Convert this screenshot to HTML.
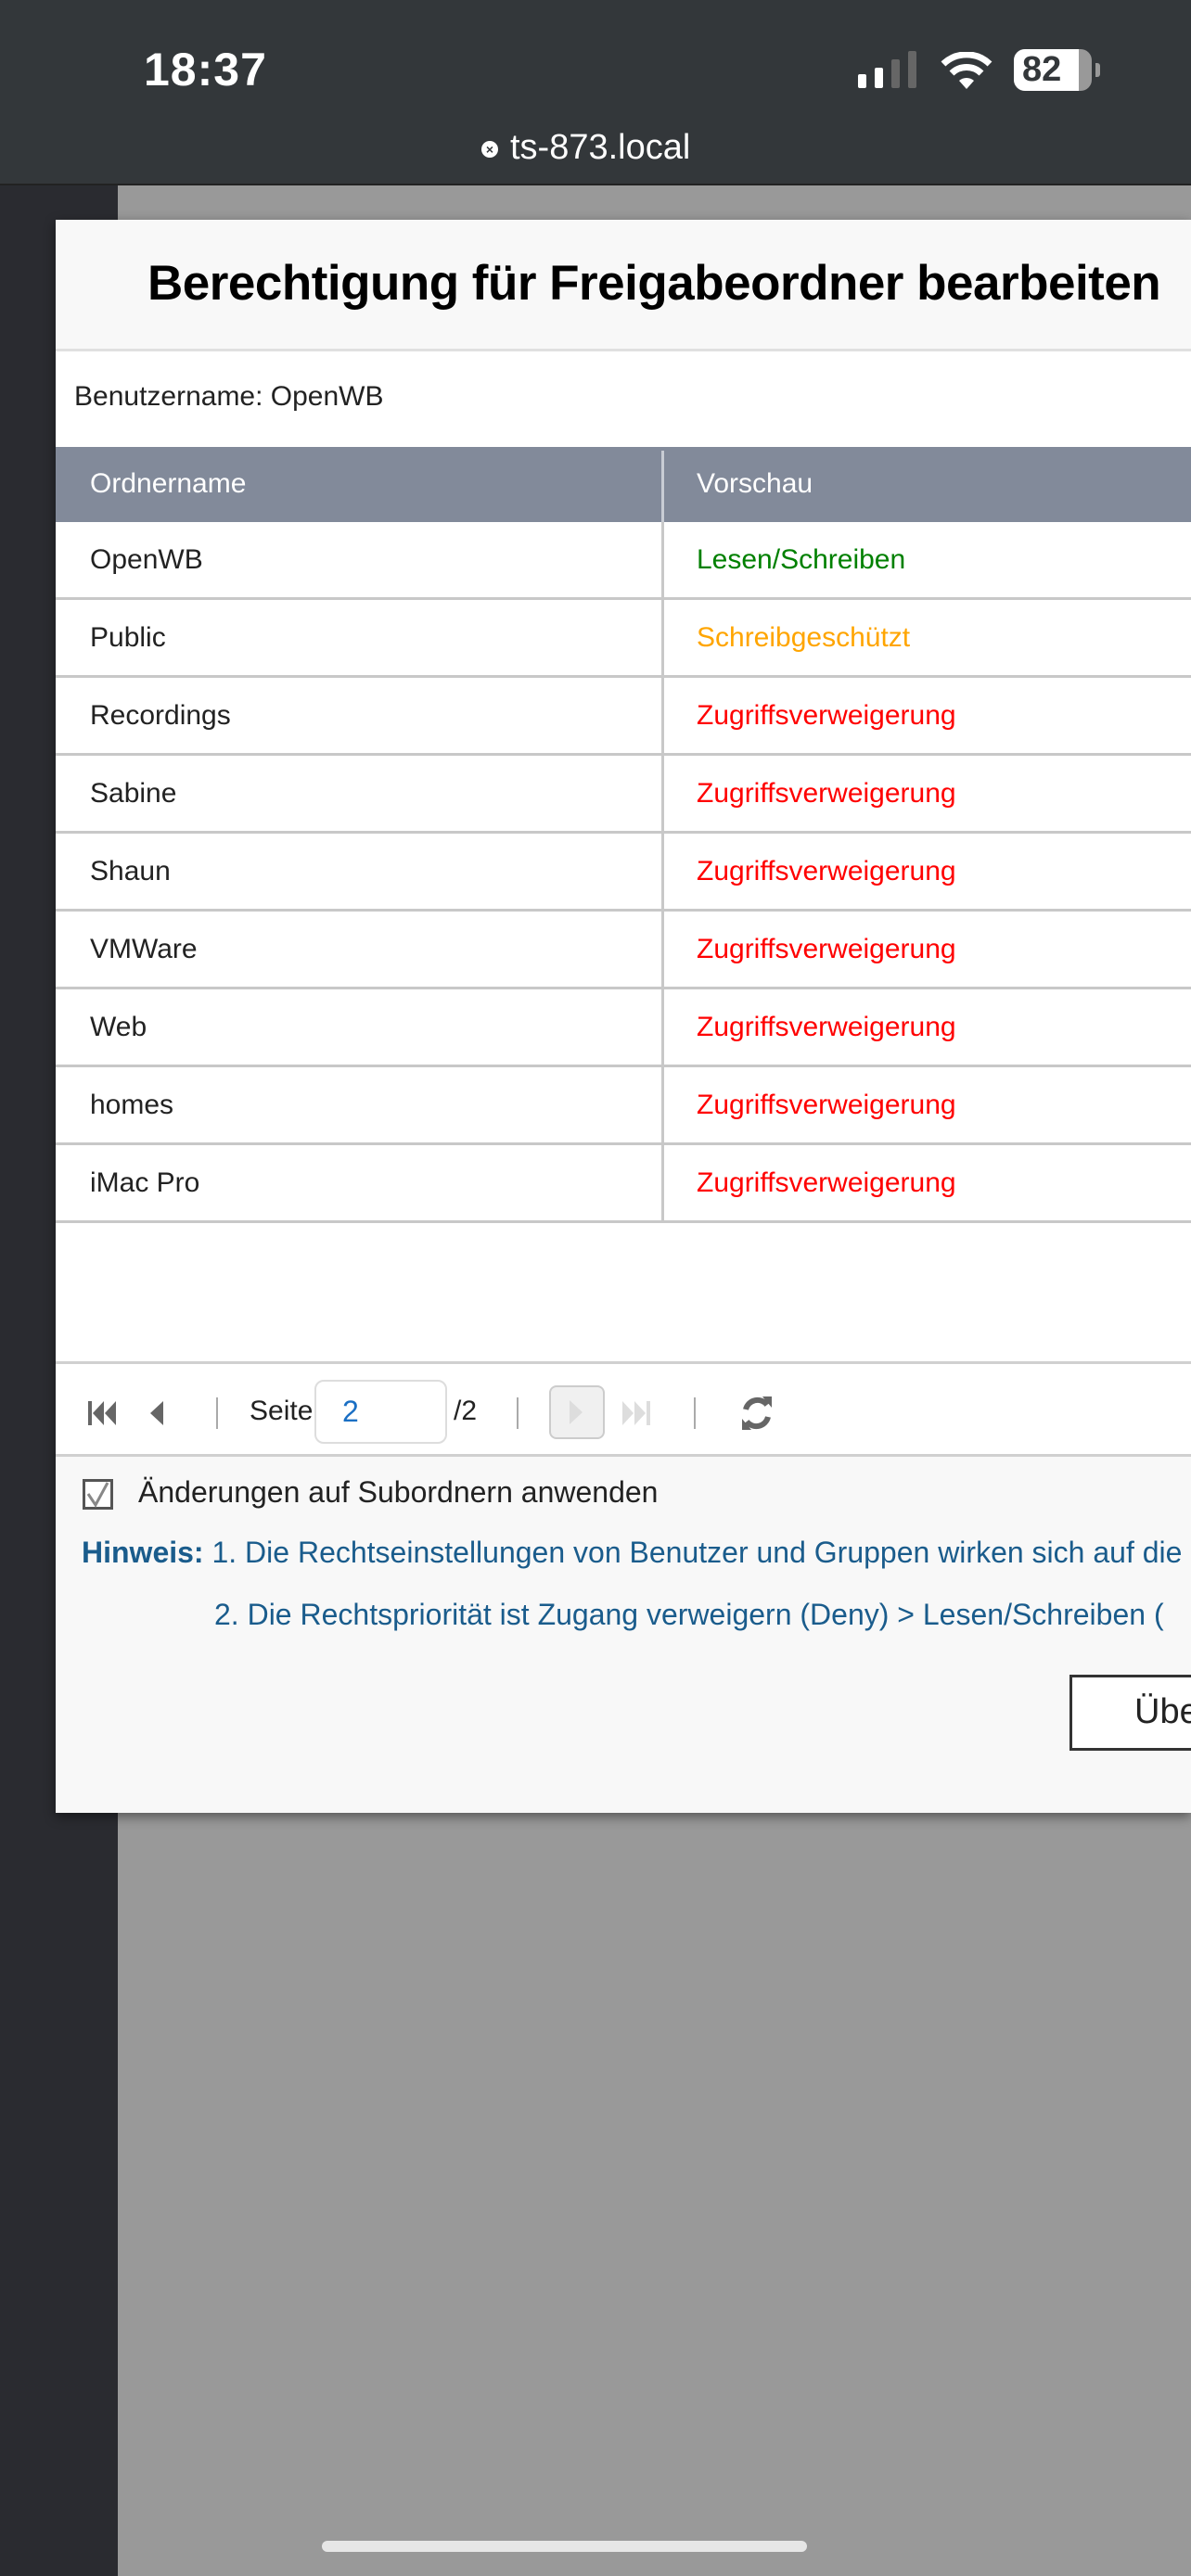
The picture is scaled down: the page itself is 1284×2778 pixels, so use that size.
<!DOCTYPE html>
<html><head><meta charset="utf-8">
<style>
*{margin:0;padding:0;box-sizing:border-box}
body{width:1284px;height:2778px;position:relative;overflow:hidden;background:#999;font-family:"Liberation Sans",Arial,sans-serif}
.abs{position:absolute}
.status{left:0;top:0;width:1284px;height:200px;background:#33373a;border-bottom:2px solid #222}
.leftstrip{left:0;top:200px;width:127px;height:2578px;background:#2a2b30}
.dialog{left:60px;top:237px;width:1224px;height:1718px;background:#f8f8f8;box-shadow:0 4px 12px rgba(0,0,0,.45)}
.title{left:0;top:0;width:1224px;height:142px;border-bottom:3px solid #e0e0e0;background:#f8f8f8}
.title span{position:absolute;left:99px;top:38px;font-size:53px;font-weight:bold;color:#000;letter-spacing:-0.5px;white-space:nowrap}
.white{left:0;top:142px;width:1224px;height:1089px;background:#fff}
.user{left:20px;top:174px;font-size:30px;color:#222}
.thead{left:0;top:245px;width:1224px;height:81px;background:#828a9a;color:#fff;font-size:30px}
.row{left:0;width:1224px;height:84px;border-bottom:3px solid #c8c8c8;font-size:30px;color:#222}
.c1{position:absolute;left:37px;top:24px}
.c2{position:absolute;left:691px;top:24px}
.vd{position:absolute;left:653px;top:0;width:3px;height:100%;background:#c8c8c8}
.pager{left:0;top:1231px;width:1224px;height:103px;background:#fff;border-top:3px solid #d0d0d0;border-bottom:3px solid #d0d0d0}
.sep{position:absolute;top:36px;width:2px;height:34px;background:#aaa}
.hint{color:#1a5c8c;font-size:32px;white-space:nowrap}
</style></head><body>
<div class="abs status">
  <div class="abs" style="left:155px;top:46px;font-size:50px;font-weight:bold;color:#fff;letter-spacing:1px">18:37</div>
  <div class="abs" style="left:925px;top:80px;width:9px;height:15px;background:#fff;border-radius:2px"></div>
  <div class="abs" style="left:943px;top:73px;width:9px;height:22px;background:#fff;border-radius:2px"></div>
  <div class="abs" style="left:961px;top:64px;width:9px;height:31px;background:#666;border-radius:2px"></div>
  <div class="abs" style="left:979px;top:55px;width:9px;height:40px;background:#666;border-radius:2px"></div>
  <svg class="abs" style="left:1012px;top:56px" width="60" height="42" viewBox="0 0 60 42"><path d="M30 40 L22 31 A12 12 0 0 1 38 31 Z" fill="#fff"/><path d="M14 23 A23 23 0 0 1 46 23" stroke="#fff" stroke-width="7" fill="none"/><path d="M5 13 A36 36 0 0 1 55 13" stroke="#fff" stroke-width="7" fill="none"/></svg>
  <div class="abs" style="left:1093px;top:53px;width:84px;height:45px;border-radius:12px;background:#999;overflow:hidden"><div style="width:70px;height:45px;background:#fff"></div></div>
  <div class="abs" style="left:1181px;top:68px;width:5px;height:15px;background:#999;border-radius:0 3px 3px 0"></div>
  <div class="abs" style="left:1102px;top:54px;font-size:38px;font-weight:bold;color:#33373a">82</div>
  <div class="abs" style="left:519px;top:152px;width:18px;height:18px;border-radius:50%;background:#fff;color:#33373a;font-size:14px;font-weight:bold;text-align:center;line-height:18px">×</div>
  <div class="abs" style="left:550px;top:138px;font-size:38px;color:#fff">ts-873.local</div>
</div>
<div class="abs leftstrip"></div>
<div class="abs dialog">
  <div class="abs title"><span>Berechtigung für Freigabeordner bearbeiten</span></div>
  <div class="abs white"></div>
  <div class="abs user">Benutzername: OpenWB</div>
  <div class="abs thead"><span class="c1" style="top:23px">Ordnername</span><div class="vd" style="background:#c8ccd4;top:4px"></div><span class="c2" style="top:23px">Vorschau</span></div>
  <div class="abs row" style="top:326px"><span class="c1">OpenWB</span><div class="vd"></div><span class="c2" style="color:#008000">Lesen/Schreiben</span></div>
  <div class="abs row" style="top:410px"><span class="c1">Public</span><div class="vd"></div><span class="c2" style="color:#ffa500">Schreibgeschützt</span></div>
  <div class="abs row" style="top:494px"><span class="c1">Recordings</span><div class="vd"></div><span class="c2" style="color:#f00">Zugriffsverweigerung</span></div>
  <div class="abs row" style="top:578px"><span class="c1">Sabine</span><div class="vd"></div><span class="c2" style="color:#f00">Zugriffsverweigerung</span></div>
  <div class="abs row" style="top:662px"><span class="c1">Shaun</span><div class="vd"></div><span class="c2" style="color:#f00">Zugriffsverweigerung</span></div>
  <div class="abs row" style="top:746px"><span class="c1">VMWare</span><div class="vd"></div><span class="c2" style="color:#f00">Zugriffsverweigerung</span></div>
  <div class="abs row" style="top:830px"><span class="c1">Web</span><div class="vd"></div><span class="c2" style="color:#f00">Zugriffsverweigerung</span></div>
  <div class="abs row" style="top:914px"><span class="c1">homes</span><div class="vd"></div><span class="c2" style="color:#f00">Zugriffsverweigerung</span></div>
  <div class="abs row" style="top:998px"><span class="c1">iMac Pro</span><div class="vd"></div><span class="c2" style="color:#f00">Zugriffsverweigerung</span></div>
  <div class="abs pager">
    <svg class="abs" style="left:34px;top:38px" width="34" height="30" viewBox="0 0 34 30"><rect x="1" y="2" width="4" height="26" fill="#666"/><path d="M18 2 L6 15 L18 28Z M31 2 L19 15 L31 28Z" fill="#666"/></svg>
    <svg class="abs" style="left:98px;top:38px" width="20" height="30" viewBox="0 0 20 30"><path d="M18 2 L4 15 L18 28Z" fill="#666"/></svg>
    <div class="sep" style="left:173px"></div>
    <div class="abs" style="left:209px;top:34px;font-size:30px;color:#222">Seite</div>
    <div class="abs" style="left:279px;top:17px;width:143px;height:69px;border:2px solid #ddd;border-radius:10px;background:#fff"></div>
    <div class="abs" style="left:309px;top:33px;font-size:32px;color:#1a6fc4">2</div>
    <div class="abs" style="left:429px;top:34px;font-size:30px;color:#222">/2</div>
    <div class="sep" style="left:497px"></div>
    <div class="abs" style="left:532px;top:23px;width:60px;height:58px;border:2px solid #ccc;border-radius:8px;background:#f0f0f0"></div>
    <svg class="abs" style="left:552px;top:37px" width="20" height="30" viewBox="0 0 20 30"><path d="M2 2 L16 15 L2 28Z" fill="#ddd"/></svg>
    <svg class="abs" style="left:608px;top:38px" width="34" height="30" viewBox="0 0 34 30"><path d="M3 2 L15 15 L3 28Z M16 2 L28 15 L16 28Z" fill="#ddd"/><rect x="29" y="2" width="4" height="26" fill="#ddd"/></svg>
    <div class="sep" style="left:688px"></div>
    <svg class="abs" style="left:736px;top:31px" width="40" height="44" viewBox="0 0 40 44"><path d="M8 18 A13 13 0 0 1 31 13" stroke="#666" stroke-width="6" fill="none"/><path d="M26 4 L36 4 L36 16Z" fill="#666"/><path d="M32 26 A13 13 0 0 1 9 31" stroke="#666" stroke-width="6" fill="none"/><path d="M14 40 L4 40 L4 28Z" fill="#666"/></svg>
  </div>
  <div class="abs" style="left:29px;top:1358px;width:33px;height:33px;border:3px solid #555;background:#fff"></div>
  <svg class="abs" style="left:32px;top:1360px" width="28" height="30" viewBox="0 0 28 30"><path d="M3 14 L11 26 L24 2" stroke="#888" stroke-width="3" fill="none"/></svg>
  <div class="abs" style="left:89px;top:1354px;font-size:32px;color:#222">Änderungen auf Subordnern anwenden</div>
  <div class="abs hint" style="left:28px;top:1419px"><b>Hinweis:</b> 1. Die Rechtseinstellungen von Benutzer und Gruppen wirken sich auf die</div>
  <div class="abs hint" style="left:171px;top:1486px">2. Die Rechtspriorität ist Zugang verweigern (Deny) &gt; Lesen/Schreiben (</div>
  <div class="abs" style="left:1093px;top:1569px;width:160px;height:82px;border:3px solid #333;background:#fff"></div>
  <div class="abs" style="left:1163px;top:1588px;font-size:38px;color:#222">Übe</div>
</div>
<div class="abs" style="left:347px;top:2740px;width:523px;height:12px;border-radius:6px;background:#e6e6e6"></div>
</body></html>
